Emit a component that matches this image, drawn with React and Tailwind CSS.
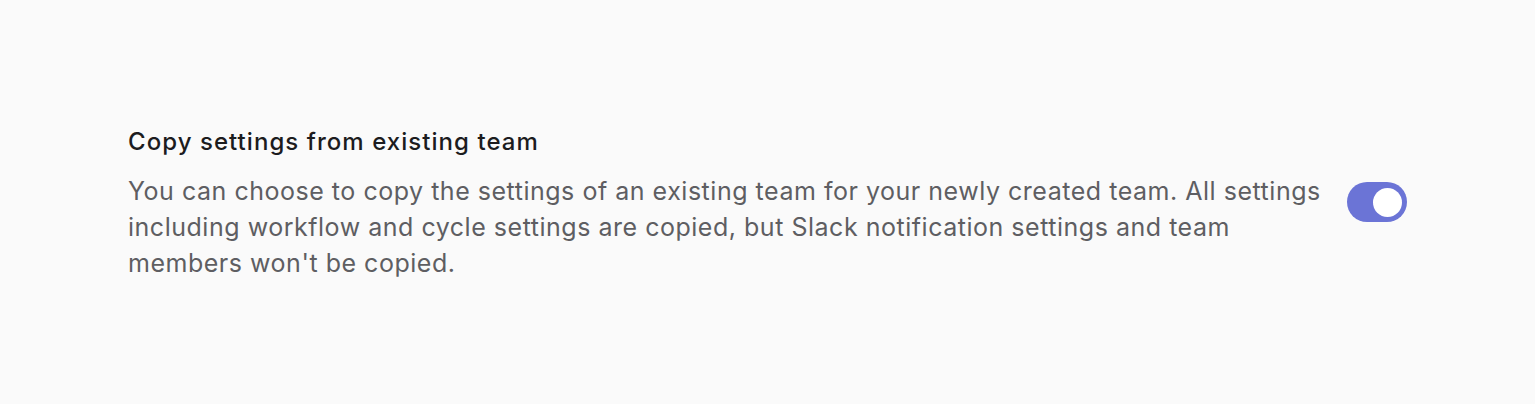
export default function App() {
  return (
    <div className="min-h-[404px] w-full bg-[#fafafa] flex items-center px-[128px]" style={{ fontFamily: "Inter, 'Noto Sans', sans-serif" }}>
      <div className="flex w-full items-center justify-between">
        <div className="w-[1200px]">
          <div className="text-[24px] leading-[36px] font-medium text-[#1c1c1e] tracking-[1.05px]">Copy settings from existing team</div>
          <div className="mt-[13px] text-[25px] leading-[36px] text-[#5e5e62] tracking-[0.52px]">
            You can choose to copy the settings of an existing team for your newly created team. All settings including workflow and cycle settings are copied, but Slack notification settings and team members won't be copied.
          </div>
        </div>
        <button className="relative w-[60px] h-[40px] rounded-full bg-[#6b74d6] shrink-0">
          <span className="absolute right-[5px] top-[5.5px] w-[29px] h-[29px] rounded-full bg-white"></span>
        </button>
      </div>
    </div>
  );
}
